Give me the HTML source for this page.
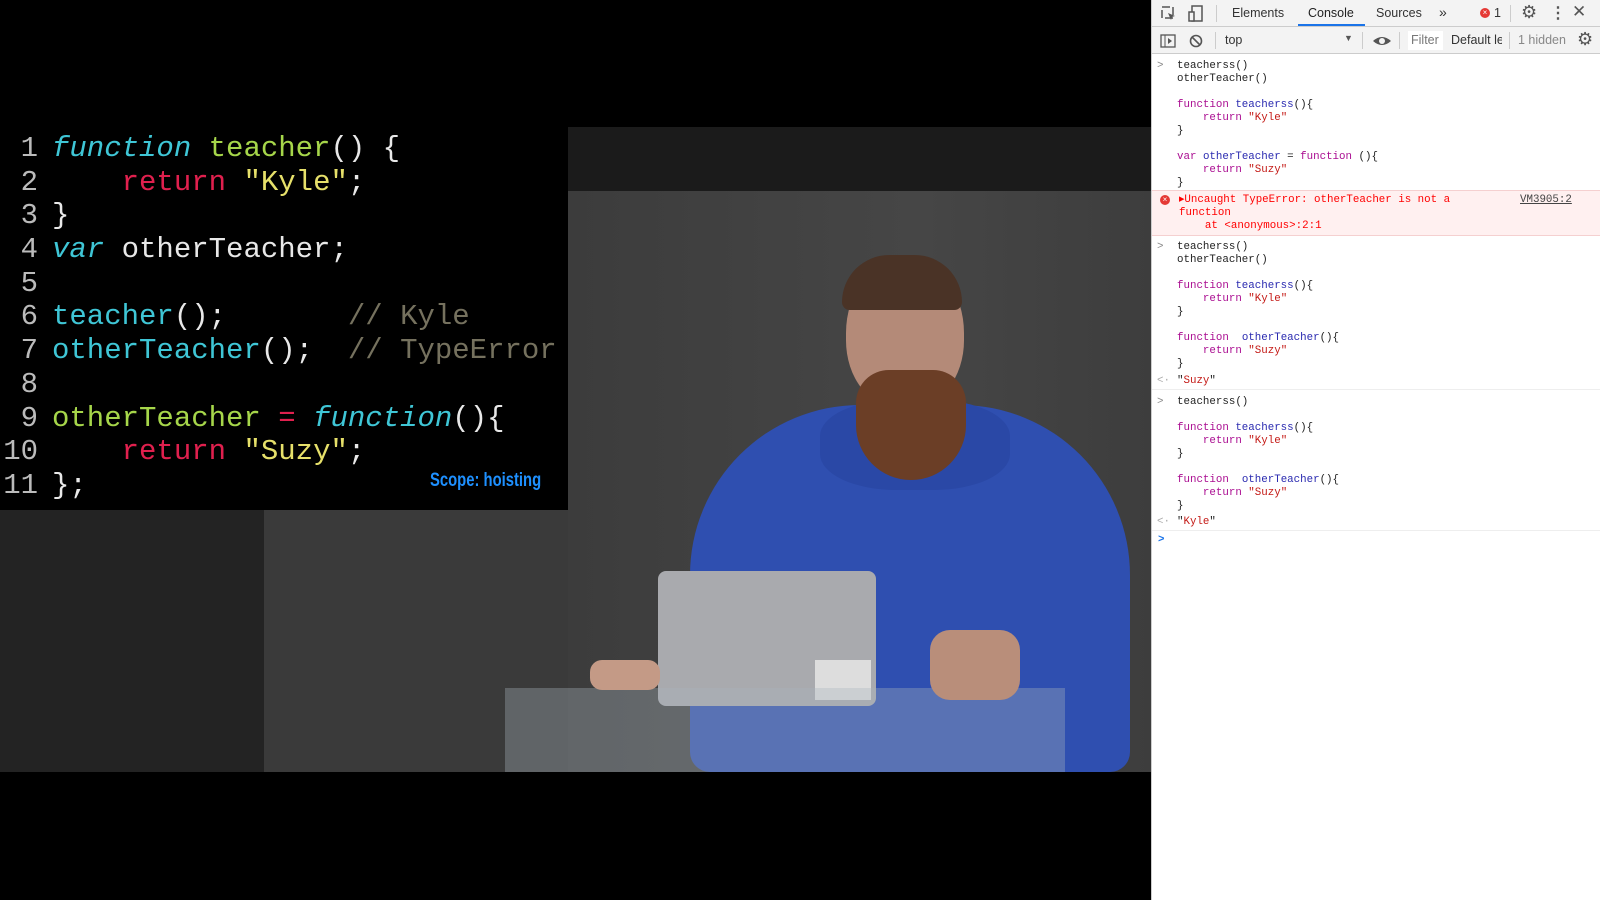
<!DOCTYPE html>
<html><head><style>
*{margin:0;padding:0;box-sizing:border-box}
body{width:1600px;height:900px;background:#000;position:relative;overflow:hidden;font-family:"Liberation Sans",sans-serif}
.a{position:absolute}
.code{font-family:"Liberation Mono",monospace;font-size:29px;line-height:33.7px;color:#e8e8e8}
.code>div{position:relative;padding-left:52px;white-space:pre;height:33.7px}
.ln{position:absolute;left:0;width:38px;text-align:right;color:#bbb}
.dt{left:1151px;top:0;width:449px;height:900px;background:#fff;border-left:1px solid #ccc}
.mono{font-family:"Liberation Mono",monospace;font-size:10.8px;line-height:13px;color:#222;white-space:pre}
.k{color:#aa0d91}.f{color:#2a2ab0}.s{color:#c41a16}
.tb{font-size:12.5px;color:#333}
</style></head><body>
<div class="a" style="left:0;top:127px;width:1151px;height:645px;background:#3a3a3a"></div>
<div class="a" style="left:568px;top:127px;width:583px;height:64px;background:#1b1b1b"></div>
<div class="a" style="left:0;top:510px;width:264px;height:262px;background:#232323"></div>
<div class="a" style="left:568px;top:191px;width:583px;height:581px;background:linear-gradient(90deg,#3c3c3c,#464646 60%,#3d3d3d)"></div>
<div class="a" style="left:690px;top:405px;width:440px;height:367px;background:#2f4fb0;border-radius:170px 170px 20px 20px"></div>
<div class="a" style="left:820px;top:400px;width:190px;height:90px;background:#2a48a6;border-radius:40%"></div>
<div class="a" style="left:846px;top:258px;width:118px;height:150px;background:#b48a78;border-radius:50% 50% 45% 45%"></div>
<div class="a" style="left:842px;top:255px;width:120px;height:55px;background:#4a3326;border-radius:60px 60px 10px 10px"></div>
<div class="a" style="left:856px;top:370px;width:110px;height:110px;background:#6b3e26;border-radius:30% 30% 50% 50%"></div>
<div class="a" style="left:658px;top:571px;width:218px;height:135px;background:#a9aaae;border-radius:8px"></div>
<div class="a" style="left:815px;top:660px;width:56px;height:40px;background:#ddd"></div>
<div class="a" style="left:505px;top:688px;width:560px;height:84px;background:rgba(170,180,190,0.35)"></div>
<div class="a" style="left:590px;top:660px;width:70px;height:30px;background:#c49a86;border-radius:12px"></div>
<div class="a" style="left:930px;top:630px;width:90px;height:70px;background:#b98e7a;border-radius:20px"></div>
<div class="a" style="left:0;top:127px;width:568px;height:383px;background:#000"></div>
<div class="a code" style="left:0;top:132px;width:568px"><div><span class="ln">1</span><i style="color:#3fc6d6">function</i> <span style="color:#a6d64a">teacher</span>() {</div><div><span class="ln">2</span>    <span style="color:#e0204e">return</span> <span style="color:#e6e06a">"Kyle"</span>;</div><div><span class="ln">3</span>}</div><div><span class="ln">4</span><i style="color:#3fc6d6">var</i> otherTeacher;</div><div><span class="ln">5</span> </div><div><span class="ln">6</span><span style="color:#3fc6d6">teacher</span>();       <span style="color:#75715e">// Kyle</span></div><div><span class="ln">7</span><span style="color:#3fc6d6">otherTeacher</span>();  <span style="color:#75715e">// TypeError</span></div><div><span class="ln">8</span> </div><div><span class="ln">9</span><span style="color:#a6d64a">otherTeacher</span> <span style="color:#e0204e">=</span> <i style="color:#3fc6d6">function</i>(){</div><div><span class="ln">10</span>    <span style="color:#e0204e">return</span> <span style="color:#e6e06a">"Suzy"</span>;</div><div><span class="ln">11</span>};</div></div>
<div class="a" style="left:430px;top:470px;color:#1e90ff;font-weight:bold;font-size:19px;transform:scaleX(0.78);transform-origin:left">Scope: hoisting</div>

<div class="a dt">
 <div class="a" style="left:0;top:0;width:449px;height:27px;background:#f3f3f3;border-bottom:1px solid #ccc"></div>
 <svg class="a" style="left:8px;top:5px" width="18" height="18"><rect x="2" y="2" width="11" height="11" fill="none" stroke="#555" stroke-width="1.5" stroke-dasharray="8 3"/><path d="M8 8l7 3-3 1-1 3z" fill="#555"/></svg>
 <svg class="a" style="left:35px;top:5px" width="18" height="18"><rect x="5" y="1" width="10" height="15" fill="none" stroke="#555" stroke-width="1.5"/><rect x="2" y="7" width="5" height="9" fill="#f3f3f3" stroke="#555" stroke-width="1.5"/></svg>
 <div class="a" style="left:64px;top:5px;width:1px;height:17px;background:#ccc"></div>
 <div class="a tb" style="left:80px;top:6px">Elements</div>
 <div class="a tb" style="left:156px;top:6px;color:#222">Console</div>
 <div class="a" style="left:146px;top:24px;width:67px;height:2px;background:#1a73e8"></div>
 <div class="a tb" style="left:224px;top:6px">Sources</div>
 <div class="a tb" style="left:287px;top:4px;font-size:14px">»</div>
 <div class="a" style="left:328px;top:8px;width:10px;height:10px;border-radius:50%;background:#e53935;color:#fff;font-size:8px;text-align:center;line-height:10px">×</div>
 <div class="a tb" style="left:342px;top:6px">1</div>
 <div class="a" style="left:358px;top:5px;width:1px;height:17px;background:#ccc"></div>
 <div class="a" style="left:369px;top:2px;font-size:18px;color:#555">⚙</div>
 <div class="a" style="left:398px;top:3px;font-size:16px;color:#555;font-weight:bold">⋮</div>
 <div class="a" style="left:420px;top:2px;font-size:17px;color:#555">✕</div>
 <div class="a" style="left:0;top:27px;width:449px;height:27px;background:#f3f3f3;border-bottom:1px solid #ccc"></div>
 <svg class="a" style="left:8px;top:33px" width="16" height="16"><rect x="1" y="2" width="14" height="12" fill="none" stroke="#555" stroke-width="1.3"/><path d="M5 2v12" stroke="#555"/><path d="M8 5l4 3-4 3z" fill="#555"/></svg>
 <svg class="a" style="left:36px;top:33px" width="16" height="16"><circle cx="8" cy="8" r="5.5" fill="none" stroke="#555" stroke-width="1.6"/><path d="M4 4l8 8" stroke="#555" stroke-width="1.6"/></svg>
 <div class="a" style="left:63px;top:32px;width:1px;height:17px;background:#ccc"></div>
 <div class="a tb" style="left:73px;top:33px">top</div>
 <div class="a" style="left:192px;top:33px;font-size:9px;color:#555">▼</div>
 <div class="a" style="left:210px;top:32px;width:1px;height:17px;background:#ccc"></div>
 <svg class="a" style="left:220px;top:33px" width="20" height="16"><path d="M1 8Q10 0 19 8Q10 16 1 8z" fill="#555"/><circle cx="10" cy="8" r="3" fill="#f3f3f3"/></svg>
 <div class="a" style="left:247px;top:32px;width:1px;height:17px;background:#ccc"></div>
 <div class="a" style="left:256px;top:31px;width:35px;height:19px;background:#fff"></div>
 <div class="a tb" style="left:259px;top:33px;color:#777;width:30px;overflow:hidden;white-space:nowrap">Filter</div>
 <div class="a tb" style="left:299px;top:33px;width:51px;overflow:hidden;white-space:nowrap">Default levels</div>
 <div class="a" style="left:357px;top:32px;width:1px;height:17px;background:#ccc"></div>
 <div class="a tb" style="left:366px;top:33px;color:#888">1 hidden</div>
 <div class="a" style="left:425px;top:29px;font-size:18px;color:#555">⚙</div>

 <div class="a mono" style="left:5px;top:60px;color:#888">&gt;</div>
 <div class="a mono" style="left:25px;top:60px">teacherss()
otherTeacher()

<span class="k">function</span> <span class="f">teacherss</span>(){
    <span class="k">return</span> <span class="s">"Kyle"</span>
}

<span class="k">var</span> <span class="f">otherTeacher</span> = <span class="k">function</span> (){
    <span class="k">return</span> <span class="s">"Suzy"</span>
}</div>
 <div class="a" style="left:0;top:190px;width:449px;height:46px;background:#fff0f0;border-top:1px solid #f5d0d0;border-bottom:1px solid #f5d0d0"></div>
 <div class="a" style="left:8px;top:195px;width:10px;height:10px;border-radius:50%;background:#e53935;color:#fff;font-size:8px;text-align:center;line-height:10px">×</div>
 <div class="a mono" style="left:27px;top:194px;color:#f00">▸Uncaught TypeError: otherTeacher is not a
function
    at &lt;anonymous&gt;:2:1</div>
 <div class="a mono" style="left:368px;top:194px;color:#444;text-decoration:underline">VM3905:2</div>

 <div class="a mono" style="left:5px;top:241px;color:#888">&gt;</div>
 <div class="a mono" style="left:25px;top:241px">teacherss()
otherTeacher()

<span class="k">function</span> <span class="f">teacherss</span>(){
    <span class="k">return</span> <span class="s">"Kyle"</span>
}

<span class="k">function</span>  <span class="f">otherTeacher</span>(){
    <span class="k">return</span> <span class="s">"Suzy"</span>
}</div>
 <div class="a mono" style="left:5px;top:375px;color:#aaa">&lt;·</div>
 <div class="a mono" style="left:25px;top:375px">"<span class="s">Suzy</span>"</div>
 <div class="a" style="left:0;top:389px;width:449px;height:1px;background:#eee"></div>
 <div class="a mono" style="left:5px;top:396px;color:#888">&gt;</div>
 <div class="a mono" style="left:25px;top:396px">teacherss()

<span class="k">function</span> <span class="f">teacherss</span>(){
    <span class="k">return</span> <span class="s">"Kyle"</span>
}

<span class="k">function</span>  <span class="f">otherTeacher</span>(){
    <span class="k">return</span> <span class="s">"Suzy"</span>
}</div>
 <div class="a mono" style="left:5px;top:516px;color:#aaa">&lt;·</div>
 <div class="a mono" style="left:25px;top:516px">"<span class="s">Kyle</span>"</div>
 <div class="a" style="left:0;top:530px;width:449px;height:1px;background:#eee"></div>
 <div class="a mono" style="left:6px;top:534px;color:#1a73e8;font-weight:bold">&gt;</div>
</div>
</body></html>
